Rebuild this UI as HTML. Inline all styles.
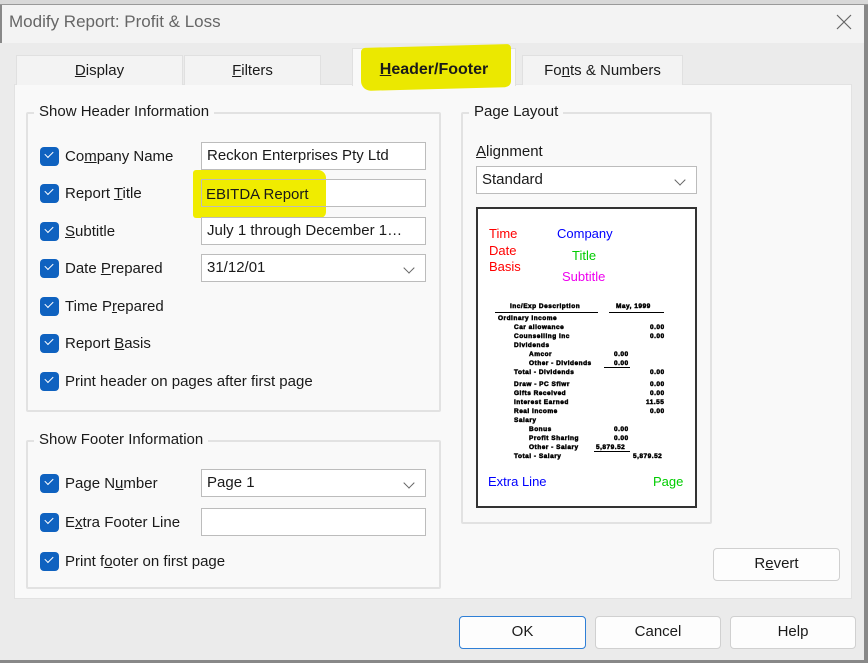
<!DOCTYPE html>
<html><head><meta charset="utf-8"><style>
*{box-sizing:border-box;margin:0;padding:0}
body{width:868px;height:663px;overflow:hidden;background:#ebebeb;font-family:"Liberation Sans",sans-serif;font-size:15px;color:#1a1a1a;position:relative}
.a{position:absolute}
.top{left:0;top:0;width:868px;height:5px;background:#d8d8d8;border-bottom:1px solid #999}
.title{left:0;top:5px;width:868px;height:38px;background:#f3f3f3;border-left:2px solid #888}
.tab{top:55px;height:30px;background:#f3f3f3;border:1px solid #e0e0e0;border-bottom:none;text-align:center;line-height:29px;font-size:15px}
.panel{left:14px;top:84px;width:838px;height:515px;background:#f9f9f9;border:1px solid #e2e2e2}
.grp{border:2px solid #e2e2e2;border-radius:2px}
.gl{background:#f9f9f9;padding:0 5px;font-size:15px}
.cb{width:19px;height:19px;background:#0f62c0;border-radius:4px}
.cb:after{content:"";position:absolute;left:5px;top:4px;width:7px;height:4px;border-left:1.6px solid #fff;border-bottom:1.6px solid #fff;transform:rotate(-45deg)}
.lab{font-size:15px}
.inp{background:#fff;border:1px solid #bcbcbc;height:28px;line-height:26px;padding-left:5px;font-size:15px;white-space:nowrap;overflow:hidden}
.chev{position:absolute;right:12px;top:9px;width:8px;height:8px;border-right:1.3px solid #666;border-bottom:1.3px solid #666;transform:rotate(45deg)}
.btn{background:#fdfdfd;border:1px solid #d0d0d0;border-radius:4px;text-align:center;line-height:30px;font-size:15px}
.m{position:absolute;font-size:6.5px;font-weight:bold;letter-spacing:.5px;white-space:nowrap;color:#000;-webkit-text-stroke:.5px #000}
</style></head><body>
<div class="a top"></div>
<div class="a title"></div>
<div class="a" style="left:9px;top:12px;font-size:17px;color:#666">Modify Report: Profit &amp; Loss</div>
<div class="a" style="left:836px;top:14px;width:16px;height:16px">
<svg width="16" height="16"><path d="M1 1L15 15M15 1L1 15" stroke="#666" stroke-width="1.2"/></svg></div>

<div class="a panel"></div>
<div class="a tab" style="left:16px;width:167px"><u>D</u>isplay</div>
<div class="a tab" style="left:184px;width:137px"><u>F</u>ilters</div>
<div class="a tab" style="left:522px;width:161px">Fo<u>n</u>ts &amp; Numbers</div>
<div class="a" style="left:352px;top:48px;width:164px;height:38px;background:#f9f9f9;border:1px solid #e0e0e0;border-bottom:none"></div>
<div class="a" style="left:361px;top:46px;width:150px;height:43px;background:#ebe800;border-radius:4px 4px 6px 10px;transform:skewY(-1.5deg)"></div>
<div class="a" style="left:355px;top:55px;width:158px;height:32px;text-align:center;line-height:29px;font-weight:bold;font-size:16px"><u>H</u>eader/Footer</div>

<div class="a grp" style="left:26px;top:112px;width:415px;height:300px"></div>
<div class="a gl" style="left:34px;top:103px">Show Header Information</div>
<div class="a grp" style="left:26px;top:440px;width:415px;height:149px"></div>
<div class="a gl" style="left:34px;top:431px">Show Footer Information</div>

<div class="a cb" style="left:40px;top:147px"></div><div class="a lab" style="left:65px;top:148px">Co<u>m</u>pany Name</div>
<div class="a cb" style="left:40px;top:184px"></div><div class="a lab" style="left:65px;top:185px">Report <u>T</u>itle</div>
<div class="a cb" style="left:40px;top:222px"></div><div class="a lab" style="left:65px;top:223px"><u>S</u>ubtitle</div>
<div class="a cb" style="left:40px;top:259px"></div><div class="a lab" style="left:65px;top:260px">Date <u>P</u>repared</div>
<div class="a cb" style="left:40px;top:297px"></div><div class="a lab" style="left:65px;top:298px">Time P<u>r</u>epared</div>
<div class="a cb" style="left:40px;top:334px"></div><div class="a lab" style="left:65px;top:335px">Report <u>B</u>asis</div>
<div class="a cb" style="left:40px;top:372px"></div><div class="a lab" style="left:65px;top:373px">Print header on pa<u>g</u>es after first page</div>
<div class="a cb" style="left:40px;top:474px"></div><div class="a lab" style="left:65px;top:475px">Page N<u>u</u>mber</div>
<div class="a cb" style="left:40px;top:513px"></div><div class="a lab" style="left:65px;top:514px">E<u>x</u>tra Footer Line</div>
<div class="a cb" style="left:40px;top:552px"></div><div class="a lab" style="left:65px;top:553px">Print f<u>o</u>oter on first page</div>

<div class="a inp" style="left:201px;top:142px;width:225px">Reckon Enterprises Pty Ltd</div>
<div class="a inp" style="left:201px;top:179px;width:225px"></div>
<div class="a" style="left:193px;top:170px;width:133px;height:48px;background:#f0ec00;border-radius:3px 8px 6px 3px"></div>
<div class="a" style="left:201px;top:179px;width:125px;height:28px;border:1px solid #bcbcbc;border-right:none"></div>
<div class="a" style="left:206px;top:186px;font-size:15px">EBITDA Report</div>
<div class="a inp" style="left:201px;top:217px;width:225px">July 1 through December 1…</div>
<div class="a inp" style="left:201px;top:254px;width:225px">31/12/01<span class="chev"></span></div>
<div class="a inp" style="left:201px;top:469px;width:225px">Page 1<span class="chev"></span></div>
<div class="a inp" style="left:201px;top:508px;width:225px"></div>

<div class="a grp" style="left:461px;top:112px;width:251px;height:412px"></div>
<div class="a gl" style="left:469px;top:103px">Page Layout</div>
<div class="a lab" style="left:476px;top:143px"><u>A</u>lignment</div>
<div class="a inp" style="left:476px;top:166px;width:221px">Standard<span class="chev"></span></div>
<div class="a" style="left:476px;top:207px;width:221px;height:301px;background:#fff;border:2px solid #333">
<div class="a" style="left:11px;top:17px;color:#f00;font-size:13px;line-height:16.5px">Time<br>Date<br>Basis</div>
<div class="a" style="left:79px;top:17px;color:#00f;font-size:13px">Company</div>
<div class="a" style="left:94px;top:39px;color:#0c0;font-size:13px">Title</div>
<div class="a" style="left:84px;top:60px;color:#e0e;font-size:13px">Subtitle</div>
<div class="a" style="left:10px;top:265px;color:#00f;font-size:13px">Extra Line</div>
<div class="a" style="left:175px;top:265px;color:#0c0;font-size:13px">Page</div>
<div class="m" style="left:32px;top:94px">Inc/Exp Description</div>
<div class="a" style="left:17px;top:103px;width:103px;border-top:1px solid #000"></div>
<div class="m" style="left:138px;top:94px">May, 1999</div>
<div class="a" style="left:131px;top:103px;width:55px;border-top:1px solid #000"></div>
<div class="m" style="left:20px;top:106px">Ordinary Income</div>
<div class="m" style="left:36px;top:115px">Car allowance</div><div class="m" style="left:172px;top:115px">0.00</div>
<div class="m" style="left:36px;top:124px">Counselling Inc</div><div class="m" style="left:172px;top:124px">0.00</div>
<div class="m" style="left:36px;top:133px">Dividends</div>
<div class="m" style="left:51px;top:142px">Amcor</div><div class="m" style="left:136px;top:142px">0.00</div>
<div class="m" style="left:51px;top:151px">Other - Dividends</div><div class="m" style="left:136px;top:151px">0.00</div>
<div class="a" style="left:126px;top:158px;width:26px;border-top:1px solid #000"></div>
<div class="m" style="left:36px;top:160px">Total - Dividends</div><div class="m" style="left:172px;top:160px">0.00</div>
<div class="m" style="left:36px;top:172px">Draw - PC Sflwr</div><div class="m" style="left:172px;top:172px">0.00</div>
<div class="m" style="left:36px;top:181px">Gifts Received</div><div class="m" style="left:172px;top:181px">0.00</div>
<div class="m" style="left:36px;top:190px">Interest Earned</div><div class="m" style="left:168px;top:190px">11.55</div>
<div class="m" style="left:36px;top:199px">Real Income</div><div class="m" style="left:172px;top:199px">0.00</div>
<div class="m" style="left:36px;top:208px">Salary</div>
<div class="m" style="left:51px;top:217px">Bonus</div><div class="m" style="left:136px;top:217px">0.00</div>
<div class="m" style="left:51px;top:226px">Profit Sharing</div><div class="m" style="left:136px;top:226px">0.00</div>
<div class="m" style="left:51px;top:235px">Other - Salary</div><div class="m" style="left:118px;top:235px">5,879.52</div>
<div class="a" style="left:116px;top:242px;width:36px;border-top:1px solid #000"></div>
<div class="m" style="left:36px;top:244px">Total - Salary</div><div class="m" style="left:155px;top:244px">5,879.52</div>
</div>

<div class="a btn" style="left:713px;top:548px;width:127px;height:33px">R<u>e</u>vert</div>
<div class="a btn" style="left:459px;top:616px;width:127px;height:33px;border:1.5px solid #2f7fd6">OK</div>
<div class="a btn" style="left:595px;top:616px;width:126px;height:33px">Cancel</div>
<div class="a btn" style="left:730px;top:616px;width:126px;height:33px">Help</div>
<div class="a" style="left:0;top:660px;width:868px;height:3px;background:#888"></div>
<div class="a" style="left:864px;top:5px;width:4px;height:658px;background:#888"></div>
</body></html>
